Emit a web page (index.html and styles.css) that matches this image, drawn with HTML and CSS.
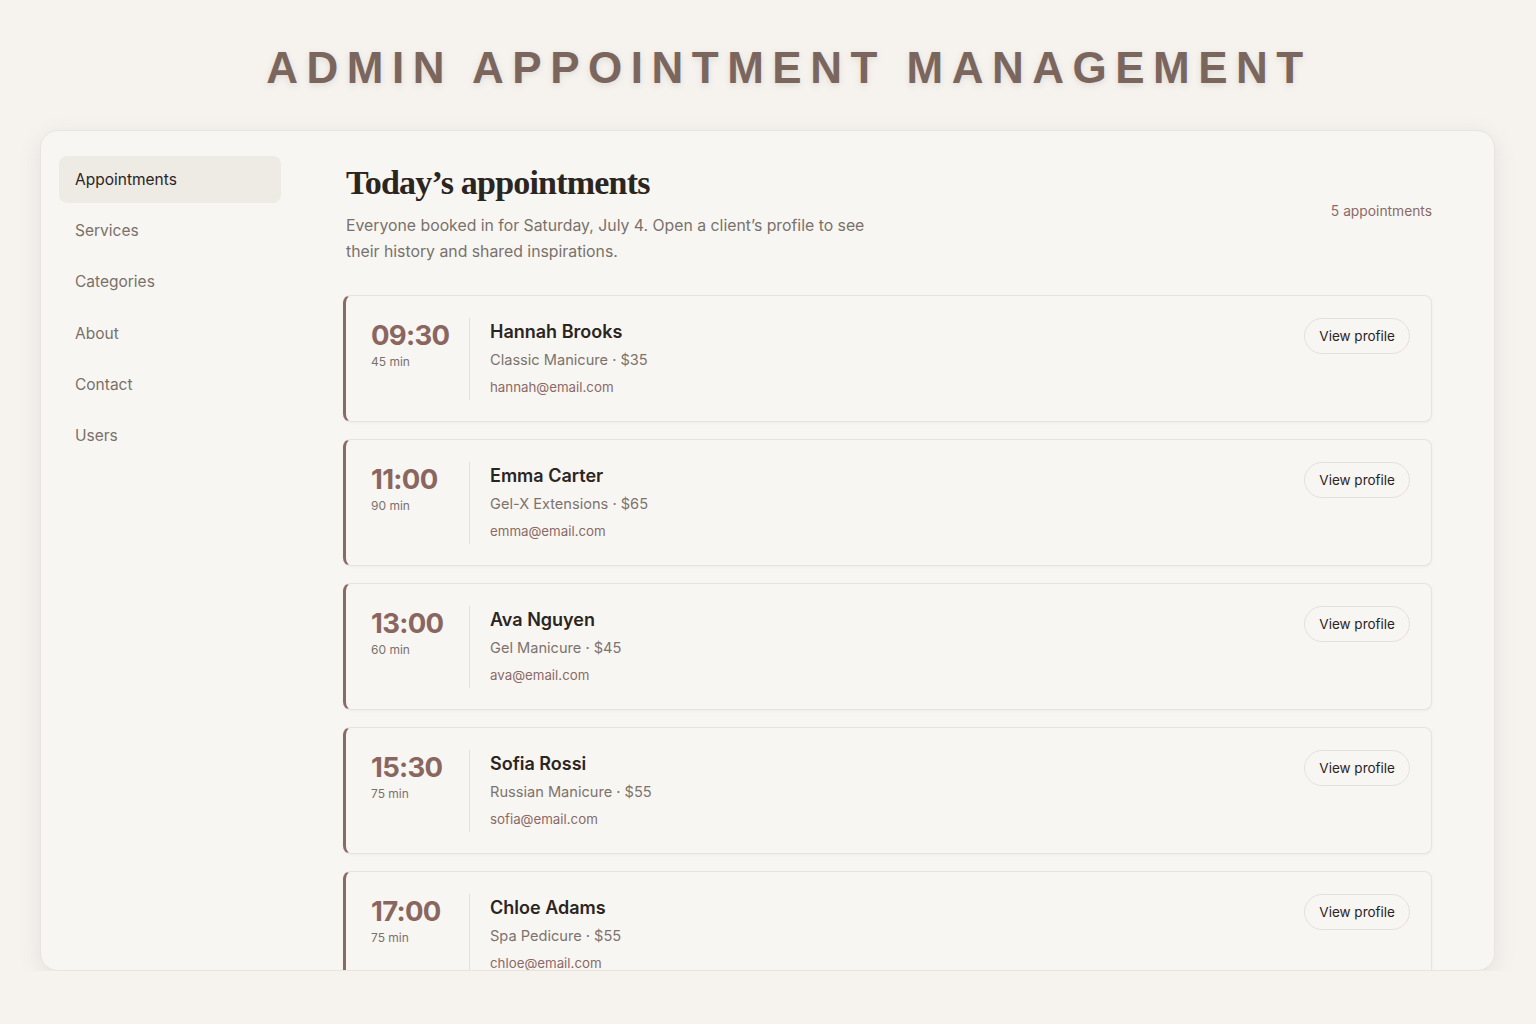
FILE: index.html
```html
<!DOCTYPE html>
<html lang="en">
<head>
    <meta charset="UTF-8">
    <meta name="viewport" content="width=device-width, initial-scale=1.0">
    <title>Admin Appointment Management</title>
    <link rel="stylesheet" href="styles.css">
</head>
<body>
    <h1 class="page-title">Admin Appointment Management</h1>

    <div class="panel">
        <nav class="side-nav">
            <a class="nav-item active" href="#">Appointments</a>
            <a class="nav-item" href="#">Services</a>
            <a class="nav-item" href="#">Categories</a>
            <a class="nav-item" href="#">About</a>
            <a class="nav-item" href="#">Contact</a>
            <a class="nav-item" href="#">Users</a>
        </nav>

        <main class="content">
            <div class="content-head">
                <div>
                    <h2 class="content-title">Today’s appointments</h2>
                    <p class="content-sub">Everyone booked in for Saturday, July 4. Open a client’s profile to see their history and shared inspirations.</p>
                </div>
                <span class="count">5 appointments</span>
            </div>

            <div class="appt-list">
                <div class="appt">
                    <div class="appt-time">
                        <span class="time">09:30</span>
                        <span class="duration">45 min</span>
                    </div>
                    <div class="appt-info">
                        <span class="client">Hannah Brooks</span>
                        <span class="service">Classic Manicure · $35</span>
                        <span class="email">hannah@email.com</span>
                    </div>
                    <button class="profile-btn">View profile</button>
                </div>

                <div class="appt">
                    <div class="appt-time">
                        <span class="time">11:00</span>
                        <span class="duration">90 min</span>
                    </div>
                    <div class="appt-info">
                        <span class="client">Emma Carter</span>
                        <span class="service">Gel-X Extensions · $65</span>
                        <span class="email">emma@email.com</span>
                    </div>
                    <button class="profile-btn">View profile</button>
                </div>

                <div class="appt">
                    <div class="appt-time">
                        <span class="time">13:00</span>
                        <span class="duration">60 min</span>
                    </div>
                    <div class="appt-info">
                        <span class="client">Ava Nguyen</span>
                        <span class="service">Gel Manicure · $45</span>
                        <span class="email">ava@email.com</span>
                    </div>
                    <button class="profile-btn">View profile</button>
                </div>

                <div class="appt">
                    <div class="appt-time">
                        <span class="time">15:30</span>
                        <span class="duration">75 min</span>
                    </div>
                    <div class="appt-info">
                        <span class="client">Sofia Rossi</span>
                        <span class="service">Russian Manicure · $55</span>
                        <span class="email">sofia@email.com</span>
                    </div>
                    <button class="profile-btn">View profile</button>
                </div>

                <div class="appt">
                    <div class="appt-time">
                        <span class="time">17:00</span>
                        <span class="duration">75 min</span>
                    </div>
                    <div class="appt-info">
                        <span class="client">Chloe Adams</span>
                        <span class="service">Spa Pedicure · $55</span>
                        <span class="email">chloe@email.com</span>
                    </div>
                    <button class="profile-btn">View profile</button>
                </div>
            </div>
        </main>
    </div>
</body>
</html>
```

FILE: styles.css
```css
body {
    font-family: Inter, "Liberation Sans", sans-serif;
    margin: 0;
    padding: 0;
    background-color: #f6f3ef;
    color: #2b2522;
}

.page-title {
    margin: 0;
    padding: 46px 0 0 42px;
    height: 84px;
    box-sizing: border-box;
    text-align: center;
    font-family: "Liberation Sans", Arial, sans-serif;
    font-size: 44px;
    font-weight: 700;
    line-height: 44px;
    letter-spacing: 8.5px;
    text-transform: uppercase;
    color: #7b665d;
    text-shadow: 0 2px 6px rgba(120, 100, 90, 0.18);
}

.panel {
    display: grid;
    grid-template-columns: 222px 1fr;
    column-gap: 62px;
    width: 1455px;
    height: 841px;
    margin: 46px 0 0 40px;
    padding: 25px 62px 0 18px;
    box-sizing: border-box;
    background-color: #f8f6f3;
    border: 1px solid #e9e4de;
    border-radius: 18px;
    box-shadow: 0 6px 22px rgba(110, 90, 70, 0.12);
    overflow: hidden;
}

/* sidebar */
.side-nav {
    display: flex;
    flex-direction: column;
    gap: 4.2px;
}
.nav-item {
    display: block;
    height: 47px;
    line-height: 47px;
    padding: 0 16px;
    border-radius: 8px;
    font-size: 15.5px;
    color: #7a706a;
    text-decoration: none;
}
.nav-item.active {
    background-color: #eeeae4;
    color: #2b2522;
}

/* main content */
.content-head {
    display: flex;
    justify-content: space-between;
    align-items: flex-start;
    padding-left: 3px;
}
.content-title {
    margin: 7px 0 0;
    font-family: "Liberation Serif", "DejaVu Serif", serif;
    font-size: 34px;
    font-weight: 700;
    line-height: 40px;
    letter-spacing: -0.8px;
    color: #2b2522;
}
.content-sub {
    margin: 10px 0 0;
    max-width: 540px;
    font-size: 15.8px;
    line-height: 26px;
    color: #7a716b;
}
.count {
    margin-top: 47px;
    font-size: 13.8px;
    color: #8a6a66;
}

.appt-list {
    display: flex;
    flex-direction: column;
    gap: 17px;
    margin-top: 30px;
}
.appt {
    display: flex;
    align-items: flex-start;
    height: 127px;
    box-sizing: border-box;
    padding: 22px 21px 0 25px;
    background-color: #f8f6f3;
    border: 1px solid #e8e3dd;
    border-left: 3px solid #8b6a63;
    border-radius: 8px;
    box-shadow: 0 1px 3px rgba(110, 90, 70, 0.06);
}
.appt-time {
    display: flex;
    flex-direction: column;
    width: 98px;
}
.time {
    font-size: 27.5px;
    font-weight: 700;
    line-height: 34px;
    letter-spacing: -0.7px;
    color: #8a6660;
}
.duration {
    margin-top: 2px;
    font-size: 12px;
    color: #7a716b;
}
.appt-info {
    display: flex;
    flex-direction: column;
    flex: 1;
    padding-left: 20px;
    min-height: 82px;
    border-left: 1px solid #e6e0da;
}
.client {
    margin-top: 2px;
    font-size: 18px;
    font-weight: 600;
    line-height: 24px;
    color: #2b2522;
}
.service {
    margin-top: 7px;
    font-size: 14.6px;
    color: #7c736d;
}
.email {
    margin-top: 10px;
    font-size: 13.3px;
    color: #8a6a66;
}
.profile-btn {
    height: 36px;
    padding: 0 14px;
    border: 1px solid #e6e0da;
    border-radius: 18px;
    background-color: #f8f6f3;
    font-family: Inter, "Liberation Sans", sans-serif;
    font-size: 13.5px;
    color: #2b2522;
    cursor: pointer;
}
```
